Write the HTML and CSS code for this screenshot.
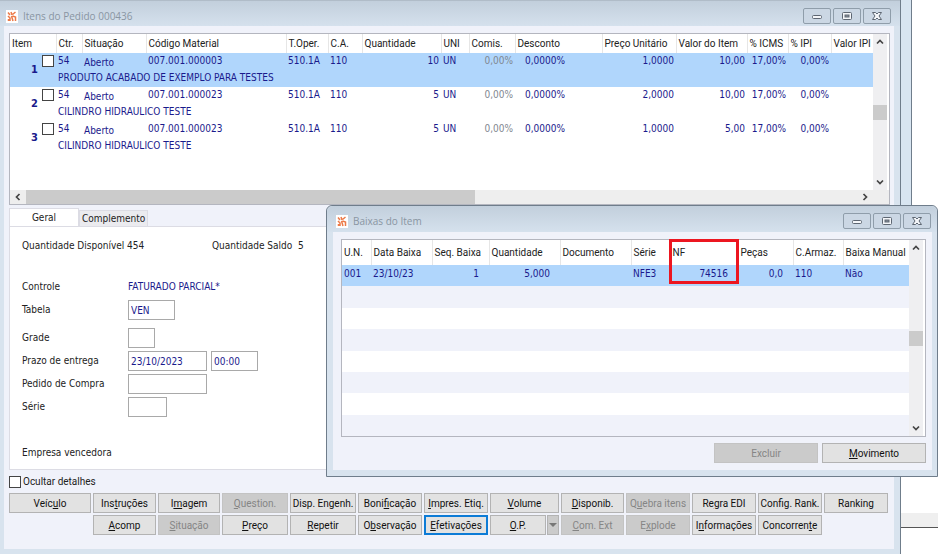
FILE: index.html
```html
<!DOCTYPE html>
<html lang="pt-BR">
<head>
	<meta charset="utf-8">
	<title>Itens do Pedido</title>

	<link rel="stylesheet" href="styles.css">
</head>
<body>
	<svg class="sprite">
		<symbol id="logo" viewBox="0 0 12 13">
			<rect width="12" height="13" fill="#fff"/>
			<path d="M2 2.500l2 2.500M5 2l1 3M6.500 4.500L9.500 2M2 6l2 2v3M5.500 6l1.500 5M6.500 6l3 1v4M2.500 9v2" stroke="#ec7a48" stroke-width="1.500" fill="none"/>
		</symbol>
		<symbol id="min" viewBox="0 0 12 10">
			<rect x="1.500" y="4.500" width="9" height="3" rx="1" fill="#f4f6f9" stroke="#5d6672"/>
		</symbol>
		<symbol id="max" viewBox="0 0 12 10">
			<rect x="1.500" y="1.500" width="9" height="7" rx="1" fill="#f4f6f9" stroke="#5d6672"/>
			<rect x="4" y="4" width="4" height="2" fill="#8a919b" stroke="#5d6672"/>
		</symbol>
		<symbol id="close" viewBox="0 0 12 10">
			<path d="M1.500 1.500h3l1.500 1.500 1.500-1.500h3L8 5l2.500 3.500h-3L6 7 4.500 8.500h-3L4 5z" fill="#f4f6f9" stroke="#5d6672"/>
		</symbol>
		<symbol id="up" viewBox="0 0 8 8"><path d="M1 5.500l3-3 3 3" fill="none" stroke="#444" stroke-width="1.700"/></symbol>
		<symbol id="down" viewBox="0 0 8 8"><path d="M1 2.500l3 3 3-3" fill="none" stroke="#444" stroke-width="1.700"/></symbol>
		<symbol id="left" viewBox="0 0 8 8"><path d="M5.500 1l-3 3 3 3" fill="none" stroke="#444" stroke-width="1.700"/></symbol>
		<symbol id="right" viewBox="0 0 8 8"><path d="M2.500 1l3 3-3 3" fill="none" stroke="#444" stroke-width="1.700"/></symbol>
	</svg>

	<div class="desktop">
		<main class="window">
			<header class="titlebar">
				<svg class="logo"><use href="#logo"/></svg>
				<h1>Itens do Pedido 000436</h1>
				<button class="ctl" aria-label="Minimizar"><svg><use href="#min"/></svg></button>
				<button class="ctl" aria-label="Maximizar"><svg><use href="#max"/></svg></button>
				<button class="ctl" aria-label="Fechar"><svg><use href="#close"/></svg></button>
			</header>

			<div class="content">
				<div class="gridbox items">
					<div class="view">
						<table>
							<colgroup>
								<col class="w46"><col class="w26"><col class="w64"><col class="w140"><col class="w42"><col class="w34"><col class="w79"><col class="w28"><col class="w46"><col class="w87"><col class="w74"><col class="w71"><col class="w41"><col class="w43"><col>
							</colgroup>
							<thead>
								<tr>
									<th>Item</th><th>Ctr.</th><th>Situação</th><th>Código Material</th><th>T.Oper.</th><th>C.A.</th><th>Quantidade</th><th>UNI</th><th>Comis.</th><th>Desconto</th><th>Preço Unitário</th><th>Valor do Item</th><th>% ICMS</th><th>% IPI</th><th>Valor IPI</th>
								</tr>
							</thead>
							<tbody class="selected">
								<tr>
									<td rowspan="2"><div class="pick"><b>1</b><input type="checkbox" aria-label="Item 1"></div></td>
									<td>54</td><td class="status">Aberto</td><td>007.001.000003</td><td>510.1A</td><td>110</td><td class="num">10</td><td>UN</td><td class="num off">0,00%</td><td class="desc">0,0000%</td><td class="num">1,0000</td><td class="num">10,00</td><td class="num">17,00%</td><td class="num">0,00%</td><td></td>
								</tr>
								<tr><td colspan="14">PRODUTO ACABADO DE EXEMPLO PARA TESTES</td></tr>
							</tbody>
							<tbody>
								<tr>
									<td rowspan="2"><div class="pick"><b>2</b><input type="checkbox" aria-label="Item 2"></div></td>
									<td>54</td><td class="status">Aberto</td><td>007.001.000023</td><td>510.1A</td><td>110</td><td class="num">5</td><td>UN</td><td class="num off">0,00%</td><td class="desc">0,0000%</td><td class="num">2,0000</td><td class="num">10,00</td><td class="num">17,00%</td><td class="num">0,00%</td><td></td>
								</tr>
								<tr><td colspan="14">CILINDRO HIDRAULICO TESTE</td></tr>
							</tbody>
							<tbody>
								<tr>
									<td rowspan="2"><div class="pick"><b>3</b><input type="checkbox" aria-label="Item 3"></div></td>
									<td>54</td><td class="status">Aberto</td><td>007.001.000023</td><td>510.1A</td><td>110</td><td class="num">5</td><td>UN</td><td class="num off">0,00%</td><td class="desc">0,0000%</td><td class="num">1,0000</td><td class="num">5,00</td><td class="num">17,00%</td><td class="num">0,00%</td><td></td>
								</tr>
								<tr><td colspan="14">CILINDRO HIDRAULICO TESTE</td></tr>
							</tbody>
						</table>
					</div>
					<div class="vscroll">
						<svg class="arrow"><use href="#up"/></svg>
						<span class="thumb"></span>
						<svg class="arrow"><use href="#down"/></svg>
					</div>
					<div class="hscroll">
						<svg class="arrow"><use href="#left"/></svg>
						<div class="track"><span class="thumb"></span></div>
						<svg class="arrow"><use href="#right"/></svg>
					</div>
				</div>

				<nav class="tabs">
					<button class="tab active">Geral</button>
					<button class="tab">Complemento</button>
				</nav>

				<form class="panel">
					<div class="totals">
						<span>Quantidade Disponível</span><span>454</span>
						<span>Quantidade Saldo</span><span>5</span>
					</div>
					<div class="field">
						<span>Controle</span><span class="value">FATURADO PARCIAL*</span>
					</div>
					<div class="field">
						<label for="tabela">Tabela</label><input id="tabela" class="w47" value="VEN">
					</div>
					<div class="field spaced">
						<label for="grade">Grade</label><input id="grade" class="w27">
					</div>
					<div class="field">
						<label for="prazo">Prazo de entrega</label><input id="prazo" class="w79" value="23/10/2023"><input class="w47" value="00:00" aria-label="Hora de entrega">
					</div>
					<div class="field">
						<label for="pedido">Pedido de Compra</label><input id="pedido" class="w79">
					</div>
					<div class="field">
						<label for="serie">Série</label><input id="serie" class="w39">
					</div>
					<div class="winner">Empresa vencedora</div>
				</form>

				<div class="hide">
					<input type="checkbox" id="ocultar"><label for="ocultar">Ocultar detalhes</label>
				</div>

				<div class="actions">
					<button class="btn">Veíc<u>u</u>lo</button>
					<button class="btn">Ins<u>t</u>ruções</button>
					<button class="btn">I<u>m</u>agem</button>
					<button class="btn" disabled><u>Q</u>uestion.</button>
					<button class="btn">Disp. Engenh.</button>
					<button class="btn">Boni<u>f</u>icação</button>
					<button class="btn"><u>I</u>mpres. Etiq.</button>
					<button class="btn"><u>V</u>olume</button>
					<button class="btn"><u>D</u>isponib.</button>
					<button class="btn" disabled>Q<u>u</u>ebra itens</button>
					<button class="btn">Re<u>g</u>ra EDI</button>
					<button class="btn">Config. Rank.</button>
					<button class="btn">Ranking</button>

					<button class="btn second"><u>A</u>comp</button>
					<button class="btn" disabled><u>S</u>ituação</button>
					<button class="btn"><u>P</u>reço</button>
					<button class="btn"><u>R</u>epetir</button>
					<button class="btn">O<u>b</u>servação</button>
					<button class="btn focused"><u>E</u>fetivações</button>
					<div class="split">
						<button class="btn"><u>O</u>.P.</button>
						<button class="btn more" aria-label="Mais opções"></button>
					</div>
					<button class="btn" disabled><u>C</u>om. Ext</button>
					<button class="btn" disabled>E<u>x</u>plode</button>
					<button class="btn">I<u>n</u>formações</button>
					<button class="btn">Concorren<u>t</u>e</button>
				</div>
			</div>
		</main>

		<!-- edge of the parent window -->
		<div class="behind">
			<div class="edge"></div>
			<div class="blank"></div>
			<div class="bar"></div>
		</div>

		<section class="window dialog">
			<header class="titlebar">
				<svg class="logo"><use href="#logo"/></svg>
				<h1>Baixas do Item</h1>
				<button class="ctl" aria-label="Minimizar"><svg><use href="#min"/></svg></button>
				<button class="ctl" aria-label="Maximizar"><svg><use href="#max"/></svg></button>
				<button class="ctl" aria-label="Fechar"><svg><use href="#close"/></svg></button>
			</header>
			<div class="content">
				<div class="gridbox baixas">
					<div class="view">
						<table>
							<colgroup>
								<col class="w29"><col class="w61"><col class="w57"><col class="w71"><col class="w71"><col class="w39"><col class="w68"><col class="w55"><col class="w50"><col>
							</colgroup>
							<thead>
								<tr>
									<th>U.N.</th><th>Data Baixa</th><th>Seq. Baixa</th><th>Quantidade</th><th>Documento</th><th>Série</th><th class="marked">NF</th><th>Peças</th><th>C.Armaz.</th><th>Baixa Manual</th>
								</tr>
							</thead>
							<tbody>
								<tr class="selected">
									<td>001</td><td>23/10/23</td><td class="num">1</td><td class="num">5,000</td><td></td><td>NFE3</td><td class="num">74516</td><td class="num">0,0</td><td>110</td><td>Não</td>
								</tr>
								<tr><td colspan="10"></td></tr>
								<tr><td colspan="10"></td></tr>
								<tr><td colspan="10"></td></tr>
								<tr><td colspan="10"></td></tr>
								<tr><td colspan="10"></td></tr>
								<tr><td colspan="10"></td></tr>
								<tr><td colspan="10"></td></tr>
							</tbody>
						</table>
					</div>
					<div class="vscroll">
						<svg class="arrow"><use href="#up"/></svg>
						<span class="thumb"></span>
						<svg class="arrow"><use href="#down"/></svg>
					</div>
				</div>
				<div class="footer">
					<button class="btn" disabled>Excluir</button>
					<button class="btn"><u>M</u>ovimento</button>
				</div>
			</div>
		</section>
	</div>
</body>
</html>
```
FILE: styles.css
```css
*, *::before, *::after {
	box-sizing: border-box;
}

body {
	margin: 0;
	background: #fff;
	color: #222;
	font: 10px/12px "DejaVu Sans Condensed", "DejaVu Sans", sans-serif;
}

button, input {
	font: inherit;
	color: inherit;
	margin: 0;
	padding: 0;
	border-radius: 0;
}

.sprite {
	display: none;
}

.desktop {
	position: relative;
	display: flex;
	min-height: 100vh;
}

/* windows */
.window {
	display: flex;
	flex-direction: column;
	flex: 1;
	min-width: 0;
	padding: 0 6px 5px 4px;
	border-right: 1px solid #6f7d8b;
	background: #d8e3ee;
}

.titlebar {
	display: flex;
	gap: 2px;
	height: 26px;
	margin: 0 -6px 0 -4px;
	padding: 7px 9px 0 6px;
	border-top: 1px solid #b0bcc8;
	background: linear-gradient(#c2cfdc, #d5e1ed);
}

.titlebar h1 {
	flex: 1;
	margin: 1px 0 0 3px;
	font: 10px/14px "Open Sans", sans-serif;
	color: #8995a2;
}

.logo {
	width: 12px;
	height: 13px;
	margin-top: 2px;
}

.ctl {
	display: flex;
	align-items: center;
	justify-content: center;
	width: 28px;
	height: 16px;
	border: 1px solid #8f9daa;
	border-radius: 2px;
	background: #cbd7e4;
}

.ctl svg {
	width: 12px;
	height: 10px;
}

.content {
	flex: 1;
	padding: 7px 4px 0 5px;
	background: #f0f2fa;
}

/* tables */
.gridbox {
	display: grid;
	grid-template-columns: 1fr 16px;
	border: 1px solid #b4b6bf;
	background: #fff;
}

.items {
	grid-template-rows: 156px 14px;
}

.view {
	min-width: 0;
}

table {
	width: 100%;
	table-layout: fixed;
	border-collapse: collapse;
	color: #1a1a8c;
}

th, td {
	padding: 0 2px;
	white-space: nowrap;
	text-align: left;
	vertical-align: top;
}

th {
	height: 19px;
	border-right: 1px solid #e6e6e6;
	vertical-align: middle;
	font: 10px/13px Roboto, sans-serif;
	color: #222;
}

th:last-child {
	border-right: 0;
}

.items tbody tr {
	height: 17px;
}

.items td {
	height: 17px;
	padding-top: 2px;
}

.items td.status {
	padding-top: 4px;
}

.num {
	text-align: right;
}

.off {
	color: #7f8790;
}

.items .desc {
	padding-left: 10px;
}

.selected {
	background: #b0d6fc;
}

.pick {
	display: flex;
	justify-content: flex-end;
	gap: 4px;
}

.pick b {
	margin-top: 9px;
	font: bold 11px/12px "DejaVu Sans Condensed", "DejaVu Sans", sans-serif;
}

input[type=checkbox] {
	appearance: none;
	width: 12px;
	height: 12px;
	border: 1px solid #444;
	background: #fff;
}

.w26 { width: 26px; }
.w27 { width: 27px; }
.w28 { width: 28px; }
.w29 { width: 29px; }
.w34 { width: 34px; }
.w39 { width: 39px; }
.w41 { width: 41px; }
.w42 { width: 42px; }
.w43 { width: 43px; }
.w46 { width: 46px; }
.w47 { width: 47px; }
.w50 { width: 50px; }
.w55 { width: 55px; }
.w57 { width: 57px; }
.w61 { width: 61px; }
.w64 { width: 64px; }
.w68 { width: 68px; }
.w71 { width: 71px; }
.w74 { width: 74px; }
.w79 { width: 79px; }
.w87 { width: 87px; }
.w140 { width: 140px; }

/* scrollbars */
.vscroll {
	display: flex;
	flex-direction: column;
	align-items: center;
	justify-content: space-between;
	margin-right: 2px;
	padding: 4px 0;
	background: #efeff1;
}

.vscroll .thumb {
	width: 14px;
	height: 15px;
	background: #cbcbcb;
}

.hscroll {
	grid-column: 1 / 3;
	display: flex;
	align-items: center;
	padding: 0 20px 0 4px;
	background: #eeeeee;
}

.hscroll .track {
	flex: 1;
	align-self: stretch;
	display: flex;
	margin: 0 4px;
}

.hscroll .thumb {
	width: 54%;
	background: #cbcbcb;
}

.arrow {
	width: 8px;
	height: 8px;
}

/* tabs and form */
.tabs {
	display: flex;
	align-items: flex-end;
	margin-top: 3px;
}

.tab {
	height: 16px;
	padding: 0 2px;
	border: 1px solid #dcdce4;
	border-bottom: 0;
	background: #ebebef;
}

.tab.active {
	width: 70px;
	height: 18px;
	background: #fff;
}

.panel {
	height: 244px;
	padding: 13px 12px 0;
	border: 1px solid #dcdce4;
	background: #fff;
}

.totals {
	display: grid;
	grid-template-columns: 105px 85px 86px 1fr;
	margin-bottom: 25px;
}

.field {
	display: flex;
	align-items: center;
	gap: 4px;
	height: 20px;
	margin-bottom: 3px;
}

.field.spaced {
	margin-top: 8px;
}

.field > :first-child {
	width: 102px;
}

.field .value {
	color: #1a1a8c;
}

.field input {
	height: 20px;
	padding: 0 2px;
	border: 1px solid #a9a9a9;
	background: #fff;
	color: #1a1a8c;
}

.winner {
	margin-top: 30px;
}

.hide {
	display: flex;
	align-items: center;
	gap: 2px;
	height: 12px;
	margin: 6px 0 5px;
}

.hide label {
	font: 10px/12px Roboto, sans-serif;
}

/* buttons */
.btn {
	height: 20px;
	border: 1px solid #b3b3b3;
	background: #e2e2e2;
	font: 10px/13px Roboto, sans-serif;
	color: #111;
	white-space: nowrap;
}

.btn:disabled {
	border-color: #c3c3c3;
	background: #cbcbcb;
	color: #858585;
}

.btn.focused {
	border: 2px solid #0c7bd6;
}

.actions {
	display: grid;
	grid-template-columns: 82fr 63fr 62fr 66fr 66fr 64fr 64fr 69fr 63fr 64fr 64fr 64fr 64fr;
	gap: 2px;
	padding-right: 2px;
}

.second {
	grid-column: 2;
}

.split {
	display: grid;
	grid-template-columns: 1fr 12px;
	gap: 1px;
}

.more {
	display: flex;
	align-items: center;
	justify-content: center;
	background: #cbcbcb;
}

.more::before {
	content: "";
	border: 4px solid transparent;
	border-top-color: #777;
	border-bottom: 0;
}

/* parent window at the right */
.behind {
	display: flex;
	flex-direction: column;
	width: 37px;
}

.edge {
	width: 11px;
	height: 220px;
	border-right: 1px solid #6f7d8b;
	background: #d8e5f1;
}

.blank {
	height: 293px;
}

.bar {
	height: 15px;
	border-bottom: 1px solid #555;
	background: #efefef;
}

/* dialog */
.dialog {
	position: absolute;
	top: 205px;
	left: 326px;
	right: 0;
	padding: 0 5px 6px 6px;
	border: 1px solid #6f7d8b;
	border-radius: 6px 6px 0 0;
}

.dialog .titlebar {
	margin: 0 -5px 0 -6px;
	padding: 7px 6px 0 9px;
	border-top: 0;
	border-radius: 6px 6px 0 0;
}

.dialog .content {
	padding: 7px 6px 7px 8px;
}

.baixas {
	height: 198px;
}

.baixas table {
	height: 100%;
}

.baixas th {
	height: 25px;
}

.baixas td {
	height: 21px;
	padding-top: 3px;
}

.baixas td.num {
	padding-right: 10px;
}

.baixas tbody tr:nth-child(even) {
	background: #f0f2fa;
}

.marked {
	position: relative;
}

/* red frame round the NF column */
.marked::after {
	content: "";
	position: absolute;
	top: -1px;
	left: -2px;
	width: 70px;
	height: 45px;
	border: 3px solid #ec1620;
}

.footer {
	display: flex;
	justify-content: flex-end;
	gap: 4px;
	margin-top: 6px;
}

.footer .btn {
	width: 104px;
}
```
